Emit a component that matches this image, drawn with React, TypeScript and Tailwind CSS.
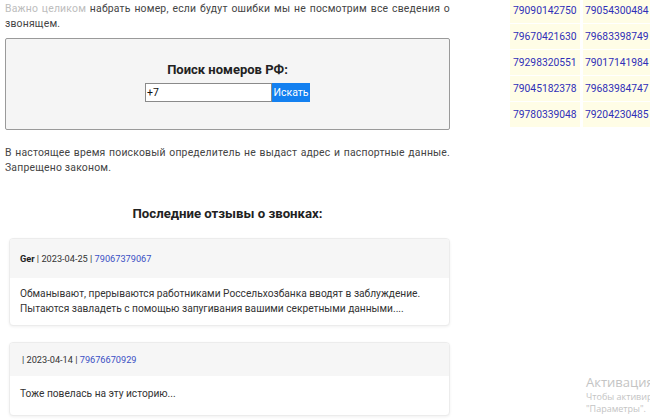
import type { ReactNode } from "react";

const numbers: [string, string][] = [
  ["79090142750", "79054300484"],
  ["79670421630", "79683398749"],
  ["79298320551", "79017141984"],
  ["79045182378", "79683984747"],
  ["79780339048", "79204230485"],
];

function ReviewCard({ head, children }: { head: ReactNode; children: ReactNode }) {
  return (
    <div className="overflow-hidden rounded-[4px] border border-[#ececec] bg-white shadow-[0_1px_3px_rgba(0,0,0,.06)]">
      <div className="bg-[#f6f6f6] px-[10px] text-[9.2px] text-[#333]">{head}</div>
      <div className="px-[10px] text-[10.2px] leading-[15px] text-[#333]">{children}</div>
    </div>
  );
}

export default function App() {
  return (
    <div className="relative h-[419px] w-[650px] overflow-hidden bg-white font-['Roboto',sans-serif]">
      <div className="flex">
        <div className="w-[450px] shrink-0 pl-[5px]">
          <p className="mt-[1px] text-justify text-[10.4px] leading-[15px] tracking-[0.2px] text-[#444] [text-align-last:left]">
            <span className="text-[#bdbdbd]">Важно целиком</span> набрать номер, если будут ошибки мы не посмотрим все сведения о звонящем.
          </p>

          <div className="mt-[7px] flex h-[92px] flex-col items-center rounded-[2px] border border-[#9a9a9a] bg-[#f5f5f5] pt-[22px]">
            <h2 className="text-[13px] font-bold leading-[18px] text-[#222]">Поиск номеров РФ:</h2>
            <div className="mt-[4px] flex h-[19px]">
              <div className="flex w-[127px] items-center border border-[#8a8a8a] bg-white pl-[1px] text-[10.5px] text-[#111]">+7</div>
              <button className="flex w-[38px] items-center justify-center bg-[#1380f0] text-[10.5px] text-white">Искать</button>
            </div>
          </div>

          <p className="mt-[15px] text-justify text-[10.4px] leading-[15px] tracking-[0.2px] text-[#444] [text-align-last:left]">
            В настоящее время поисковый определитель не выдаст адрес и паспортные данные. Запрещено законом.
          </p>

          <h3 className="mt-[30px] text-center text-[13.2px] font-bold leading-[18px] text-[#222]">Последние отзывы о звонках:</h3>

          <div className="mt-[15px] flex flex-col gap-[16px] pl-[4px]">
            <ReviewCard
              head={
                <div className="flex h-[39px] items-center pt-[1px]">
                  <span>
                    <b className="text-[#222]">Ger</b> | 2023-04-25 | <span className="text-[#3a4fc4]">79067379067</span>
                  </span>
                </div>
              }
            >
              <div className="pt-[8px] pb-[9px]">
                Обманывают, прерываются работниками Россельхозбанка вводят в заблуждение.
                <br />
                Пытаются завладеть с помощью запугивания вашими секретными данными....
              </div>
            </ReviewCard>
            <ReviewCard
              head={
                <div className="flex h-[33px] items-center pl-[2px]">
                  <span>
                    | 2023-04-14 | <span className="text-[#3a4fc4]">79676670929</span>
                  </span>
                </div>
              }
            >
              <div className="pt-[10px] pb-[14px]">Тоже повелась на эту историю...</div>
            </ReviewCard>
          </div>
        </div>

        <div className="-mt-[2px] ml-[60px] flex flex-col gap-[1px]">
          {numbers.map(([a, b]) => (
            <div key={a} className="flex gap-[3px]">
              <div className="flex h-[25px] w-[70px] items-center bg-[#fffde6] pl-[3px] text-[10.3px] text-[#2f2fb8]">{a}</div>
              <div className="flex h-[25px] w-[70px] items-center bg-[#fffde6] pl-[2px] text-[10.3px] text-[#2f2fb8]">{b}</div>
            </div>
          ))}
        </div>
      </div>

      <div className="absolute left-[586px] top-[374px] whitespace-nowrap font-['Open_Sans',sans-serif] text-[#c4c4c4]">
        <div className="text-[13px] leading-[17px]">Активация</div>
        <div className="text-[9px] leading-[12px]">Чтобы активировать</div>
        <div className="text-[9px] leading-[12px]">"Параметры".</div>
      </div>
    </div>
  );
}
